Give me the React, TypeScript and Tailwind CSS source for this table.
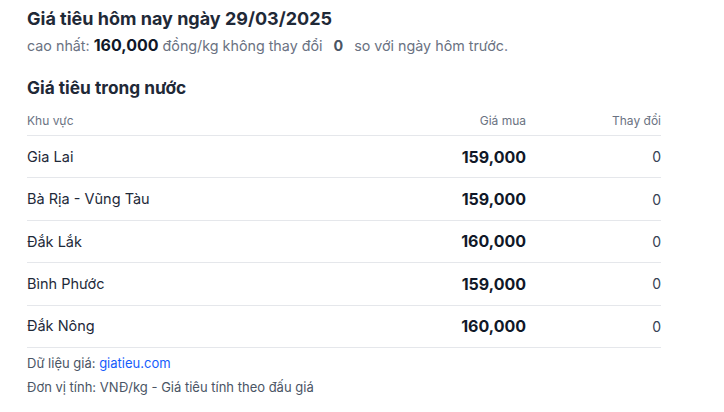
const rows = [
  { region: "Gia Lai", price: "159,000", change: "0" },
  { region: "Bà Rịa - Vũng Tàu", price: "159,000", change: "0" },
  { region: "Đắk Lắk", price: "160,000", change: "0" },
  { region: "Bình Phước", price: "159,000", change: "0" },
  { region: "Đắk Nông", price: "160,000", change: "0" },
];

export default function App() {
  return (
    <div className="min-h-[412px] bg-white font-['Inter',sans-serif] text-gray-900">
      <div className="w-[634px] ml-[27px] pt-[7px]">
        {/* Title */}
        <h1 className="text-[18px] leading-[24px] font-bold text-[#1f2937]">
          Giá tiêu hôm nay ngày 29/03/2025
        </h1>
        <p className="mt-[2px] text-[14.3px] leading-[24px] text-gray-500">
          cao nhất: <span className="text-[16px] font-bold text-gray-900">160,000</span> đồng/kg không thay đổi{" "}
          <span className="mx-[7px] font-bold text-gray-600">0</span> so với ngày hôm trước.
        </p>

        {/* Domestic table */}
        <h2 className="mt-[18px] text-[17.3px] leading-[24px] font-bold text-[#1f2937]">Giá tiêu trong nước</h2>
        <div className="mt-[6px]">
          <div className="grid grid-cols-[1fr_200px_135px] h-[30px] items-center border-b border-gray-200 text-[12px] text-gray-500">
            <span>Khu vực</span>
            <span className="text-right">Giá mua</span>
            <span className="text-right">Thay đổi</span>
          </div>
          {rows.map((r) => (
            <div
              key={r.region}
              className="grid grid-cols-[1fr_200px_135px] h-[42.4px] items-center border-b border-gray-200"
            >
              <span className="text-[14.5px] text-gray-800">{r.region}</span>
              <span className="text-right text-[16px] font-bold text-gray-900">{r.price}</span>
              <span className="text-right text-[14px] text-gray-700">{r.change}</span>
            </div>
          ))}
        </div>

        {/* Footer */}
        <div className="mt-[3px] text-[13px] leading-[24px] text-gray-600">
          <p>
            Dữ liệu giá: <a className="text-blue-600" href="#">giatieu.com</a>
          </p>
          <p>Đơn vị tính: VNĐ/kg - Giá tiêu tính theo đấu giá</p>
        </div>
      </div>
    </div>
  );
}
